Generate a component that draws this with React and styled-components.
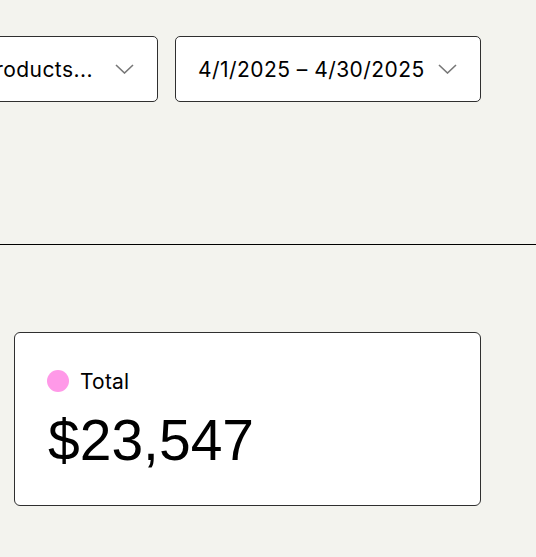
import React from 'react'
import styled, { createGlobalStyle } from 'styled-components';

const GlobalStyle = createGlobalStyle`
body {
    margin: 0;
    background: #f3f3ee;
    font-family: Inter, "Liberation Sans", sans-serif;
    color: #000;
}
`

const Page = styled.div`
padding-top: 36px;
overflow: hidden;
`

const Toolbar = styled.div`
display: flex;
justify-content: flex-end;
gap: 17px;
padding-right: 55px;
`

const Select = styled.button`
flex-shrink: 0;
display: flex;
align-items: center;
justify-content: space-between;
gap: ${props => props.gap}px;
width: ${props => props.width ? `${props.width}px` : 'auto'};
height: 66px;
box-sizing: border-box;
padding: 0 23px 0 22px;
background: #fff;
border: 1px solid #2f2f2f;
border-radius: 5px;
font-family: Inter, "Liberation Sans", sans-serif;
font-size: 21px;
letter-spacing: 0.45px;
color: #000;
white-space: nowrap;
`

const Divider = styled.hr`
margin: 142px 0 0;
border: none;
border-top: 1px solid #000;
`

const Card = styled.div`
margin: 87px 0 0 14px;
width: 467px;
height: 174px;
box-sizing: border-box;
padding: 36px 32px 0 33px;
background: #fff;
border: 1px solid #2f2f2f;
border-radius: 6px;
.card-label {
    display: flex;
    align-items: center;
    gap: 11px;
    height: 24px;
    font-size: 21px;
    letter-spacing: 0.2px;
}
.card-value {
    margin-top: 19px;
    font-family: "Liberation Sans", Arial, sans-serif;
    font-size: 57px;
    line-height: 1;
}
`

const Dot = styled.span`
margin-left: -1px;
width: 22px;
height: 22px;
border-radius: 50%;
background: ${props => props.color};
`

const Chevron = () => (
    <svg width="19" height="10" viewBox="0 0 19 10" fill="none">
        <polyline points="1,1 9.5,9 18,1" stroke="#777" strokeWidth="1.6" />
    </svg>
)

const App = () => {
    return (
        <Page>
            <GlobalStyle />
            <Toolbar>
                <Select gap={22}>
                    <span>All products...</span>
                    <Chevron />
                </Select>
                <Select width={306} gap={13}>
                    <span>4/1/2025 – 4/30/2025</span>
                    <Chevron />
                </Select>
            </Toolbar>
            <Divider />
            <Card>
                <div className='card-label'>
                    <Dot color="#ff99e8" />
                    Total
                </div>
                <div className='card-value'>$23,547</div>
            </Card>
        </Page>
    )
}

export default App;
